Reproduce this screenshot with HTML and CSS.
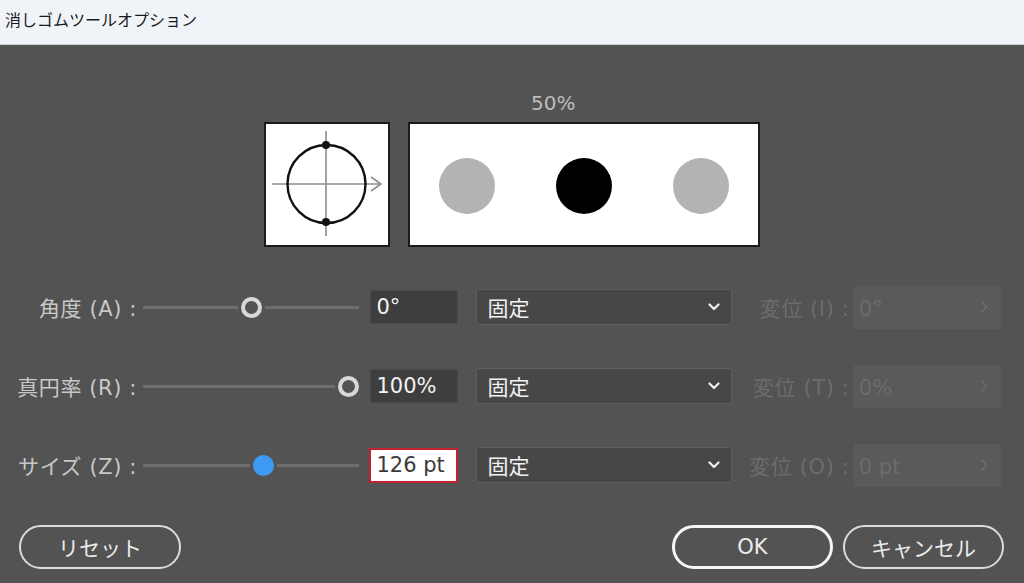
FILE: index.html
```html
<!DOCTYPE html>
<html lang="ja">
<head>
<meta charset="utf-8">
<title>消しゴムツールオプション</title>
<link rel="stylesheet" href="styles.css">
</head>
<body>
<div class="dialog">
  <div class="titlebar">消しゴムツールオプション</div>
  <div class="content">
    <div class="preview">
      <div class="pct">50%</div>
      <div class="shape-box">
        <svg width="122" height="121" viewBox="2 2 122 121">
          <line x1="8" y1="62" x2="117" y2="62" stroke="#8c8c8c" stroke-width="1.6"/>
          <polyline points="107,55 117,62 107,69" fill="none" stroke="#8c8c8c" stroke-width="1.6"/>
          <line x1="62" y1="9" x2="62" y2="114" stroke="#8c8c8c" stroke-width="1.6"/>
          <circle cx="62.5" cy="62" r="39" fill="none" stroke="#111" stroke-width="2.4"/>
          <circle cx="62" cy="23" r="4" fill="#111"/>
          <circle cx="62" cy="100" r="4" fill="#111"/>
        </svg>
      </div>
      <div class="sample-box">
        <span class="dot gray"></span>
        <span class="dot black"></span>
        <span class="dot gray"></span>
      </div>
    </div>

    <div class="row">
      <div class="lbl">角度 (A) :</div>
      <div class="slider"><span class="thumb ring" style="--pos:0.5"></span></div>
      <div class="num">0°</div>
      <div class="select"><span>固定</span><svg class="chev" width="12" height="8" viewBox="0 0 12 8"><polyline points="1.5,1.5 6,6 10.5,1.5" fill="none" stroke="#f0f0f0" stroke-width="2.2" stroke-linecap="round" stroke-linejoin="round"/></svg></div>
      <div class="dlbl">変位 (I) :</div>
      <div class="dfield"><span>0°</span><svg width="8" height="14" viewBox="0 0 8 14"><polyline points="1.5,1.5 6.5,7 1.5,12.5" fill="none" stroke="#6e6e6e" stroke-width="1.5"/></svg></div>
    </div>

    <div class="row">
      <div class="lbl">真円率 (R) :</div>
      <div class="slider"><span class="thumb ring" style="--pos:1"></span></div>
      <div class="num">100%</div>
      <div class="select"><span>固定</span><svg class="chev" width="12" height="8" viewBox="0 0 12 8"><polyline points="1.5,1.5 6,6 10.5,1.5" fill="none" stroke="#f0f0f0" stroke-width="2.2" stroke-linecap="round" stroke-linejoin="round"/></svg></div>
      <div class="dlbl">変位 (T) :</div>
      <div class="dfield"><span>0%</span><svg width="8" height="14" viewBox="0 0 8 14"><polyline points="1.5,1.5 6.5,7 1.5,12.5" fill="none" stroke="#6e6e6e" stroke-width="1.5"/></svg></div>
    </div>

    <div class="row">
      <div class="lbl">サイズ (Z) :</div>
      <div class="slider"><span class="thumb blue" style="--pos:0.56"></span></div>
      <div class="num active">126 pt</div>
      <div class="select"><span>固定</span><svg class="chev" width="12" height="8" viewBox="0 0 12 8"><polyline points="1.5,1.5 6,6 10.5,1.5" fill="none" stroke="#f0f0f0" stroke-width="2.2" stroke-linecap="round" stroke-linejoin="round"/></svg></div>
      <div class="dlbl">変位 (O) :</div>
      <div class="dfield"><span>0 pt</span><svg width="8" height="14" viewBox="0 0 8 14"><polyline points="1.5,1.5 6.5,7 1.5,12.5" fill="none" stroke="#6e6e6e" stroke-width="1.5"/></svg></div>
    </div>

    <div class="buttons">
      <div class="btn reset">リセット</div>
      <div class="btn ok">OK</div>
      <div class="btn cancel">キャンセル</div>
    </div>
  </div>
</div>
</body>
</html>
```

FILE: styles.css
```css
* { box-sizing: border-box; }
html, body { margin: 0; padding: 0; }
body {
  width: 1024px;
  height: 583px;
  overflow: hidden;
  background: #535353;
  font-family: "DejaVu Sans", "Noto Sans CJK JP", sans-serif;
}
.dialog { width: 1024px; height: 583px; display: flex; flex-direction: column; }
.titlebar {
  height: 45px;
  background: #f0f4f9;
  border-bottom: 1px solid #c9ccd0;
  color: #1a1a1a;
  font-family: "Noto Sans CJK JP", sans-serif;
  font-size: 16px;
  display: flex;
  align-items: center;
  padding: 0 0 6px 5px;
}
.content { flex: 1; padding-top: 47px; }

.preview {
  display: grid;
  grid-template-columns: 126px 352px;
  grid-template-rows: 22px 125px;
  column-gap: 18px;
  row-gap: 8px;
  margin-left: 264px;
}
.pct {
  grid-column: 2;
  grid-row: 1;
  padding-left: 123px;
  color: #bdbdbd;
  font-size: 20px;
  line-height: 22px;
}
.shape-box {
  grid-column: 1;
  grid-row: 2;
  background: #fff;
  border: 2px solid #1c1c1c;
}
.shape-box svg { display: block; }
.sample-box {
  grid-column: 2;
  grid-row: 2;
  background: #fff;
  border: 2px solid #1c1c1c;
  display: flex;
  align-items: center;
  gap: 61px;
  padding: 2px 0 0 29px;
}
.dot { width: 56px; height: 56px; border-radius: 50%; display: block; }
.dot.gray { background: #b3b3b3; }
.dot.black { background: #000; }

.row {
  display: flex;
  align-items: center;
  height: 36px;
  margin-top: 42px;
  font-size: 21px;
}
.row + .row { margin-top: 43px; }
.lbl {
  width: 137px;
  text-align: right;
  color: #c8c8c8;
  white-space: nowrap;
  letter-spacing: 0.6px;
  margin-right: -0.6px;
}
.slider {
  margin-left: 7px;
  width: 216px;
  height: 24px;
  position: relative;
  background: linear-gradient(#6f6f6f, #6f6f6f) center / 100% 3px no-repeat;
}
.thumb {
  position: absolute;
  top: 1.5px;
  left: calc(var(--pos) * 195px);
  width: 21px;
  height: 21px;
  border-radius: 50%;
  box-shadow: 0 0 0 3px #535353;
}
.thumb.ring { border: 4px solid #d8d8d8; background: #535353; }
.thumb.blue { background: #3d9af2; }

.num {
  margin-left: 11px;
  width: 88px;
  height: 34px;
  border: 1px solid #4a4a4a;
  background: #3e3e3e;
  color: #f2f2f2;
  padding-left: 5px;
  display: flex;
  align-items: center;
  white-space: nowrap;
}
.num.active {
  margin-left: 10px;
  width: 89px;
  height: 35px;
  background: #fff;
  border: 2px solid #c4202d;
  color: #3a3a3a;
  padding-left: 5px;
}
.select {
  margin-left: 18px;
  width: 256px;
  height: 36px;
  border: 1px solid #5f5f5f;
  border-radius: 3px;
  background: #474747;
  color: #f2f2f2;
  display: flex;
  align-items: center;
  justify-content: space-between;
  padding: 0 11px 0 10px;
  font-size: 21px;
}
.chev { display: block; }
.dlbl {
  width: 117px;
  text-align: right;
  color: #6c6c6c;
  white-space: nowrap;
  letter-spacing: 0.6px;
  margin-right: -0.6px;
}
.dfield {
  margin-left: 5px;
  width: 147px;
  height: 43px;
  background: #5a5a5a;
  color: #6c6c6c;
  display: flex;
  align-items: center;
  justify-content: space-between;
  padding: 4px 13px 0 5px;
}
.dfield svg { display: block; margin-top: -4px; }

.buttons {
  display: flex;
  margin-top: 42px;
  padding: 0 20px 0 19px;
}
.btn {
  height: 44px;
  width: 161px;
  border-radius: 22px;
  border: 2px solid #dcdcdc;
  color: #ececec;
  font-size: 21px;
  display: flex;
  align-items: center;
  justify-content: center;
}
.btn.reset { width: 162px; }
.btn.ok { margin-left: auto; border: 3px solid #f6f6f6; }
.btn.cancel { margin-left: 10px; }
```
